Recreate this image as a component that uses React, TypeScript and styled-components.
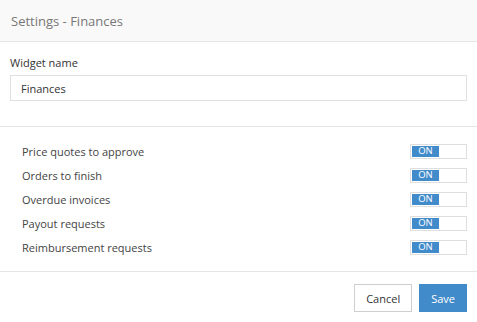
import React, { useState } from "react";
import styled, { createGlobalStyle } from "styled-components";

const GlobalStyle = createGlobalStyle`
  html, body {
    margin: 0;
    padding: 0;
    background: #fff;
  }
  body {
    font-family: "Open Sans", "Liberation Sans", sans-serif;
    color: #333;
  }
`;

const SModal = styled.div`
  width: 477px;
  height: 322px;
  display: flex;
  flex-direction: column;
  background: #fff;
`;

const SHeader = styled.div`
  height: 41px;
  display: flex;
  align-items: center;
  padding: 0 11px;
  background: #f9f9f9;
  border-bottom: 1px solid #e5e5e5;
  font-size: 13px;
  color: #777;
`;

const SSection = styled.div`
  padding: 13px 10px 25px;
  border-bottom: 1px solid #e5e5e5;
`;

const SLabel = styled.label`
  display: block;
  font-size: 11px;
  line-height: 16px;
  margin-bottom: 4px;
  color: #333;
`;

const SInput = styled.input`
  box-sizing: border-box;
  width: 100%;
  height: 26px;
  padding: 0 10px;
  border: 1px solid #e0e0e0;
  font-family: inherit;
  font-size: 11px;
  color: #333;
  outline: none;
`;

const SList = styled.div`
  padding: 12px 10px 12px 22px;
  border-bottom: 1px solid #e5e5e5;
`;

const SRow = styled.div`
  height: 24px;
  display: flex;
  align-items: center;
  justify-content: space-between;
  font-size: 11px;
  color: #444;
`;

const SToggle = styled.button<{ $on: boolean }>`
  box-sizing: border-box;
  width: 57px;
  height: 15px;
  padding: 1px;
  border: 1px solid #dedede;
  background: #fff;
  display: flex;
  justify-content: ${(p) => (p.$on ? "flex-start" : "flex-end")};
  cursor: pointer;

  & span {
    width: 27px;
    height: 100%;
    display: flex;
    align-items: center;
    justify-content: center;
    background: ${(p) => (p.$on ? "#428bca" : "#ccc")};
    color: #fff;
    font-family: "Open Sans", "Liberation Sans", sans-serif;
    font-size: 9.5px;
    line-height: 1;
  }
`;

const SFooter = styled.div`
  display: flex;
  justify-content: flex-end;
  gap: 7px;
  padding: 12px 10px 10px;
`;

const SButton = styled.button<{ $primary?: boolean }>`
  box-sizing: border-box;
  height: 28px;
  padding: 0 11px;
  font-family: inherit;
  font-size: 11px;
  cursor: pointer;
  border: 1px solid ${(p) => (p.$primary ? "#428bca" : "#cfcfcf")};
  background: ${(p) => (p.$primary ? "#428bca" : "#fff")};
  color: ${(p) => (p.$primary ? "#fff" : "#333")};
`;

const items = [
  "Price quotes to approve",
  "Orders to finish",
  "Overdue invoices",
  "Payout requests",
  "Reimbursement requests",
];

function App() {
  const [name, setName] = useState("Finances");
  const [enabled, setEnabled] = useState<boolean[]>(items.map(() => true));

  return (
    <SModal>
      <GlobalStyle />
      <SHeader>Settings - Finances</SHeader>
      <SSection>
        <SLabel>Widget name</SLabel>
        <SInput value={name} onChange={(e) => setName(e.target.value)} />
      </SSection>
      <SList>
        {items.map((item, i) => (
          <SRow key={item}>
            {item}
            <SToggle
              $on={enabled[i]}
              onClick={() =>
                setEnabled(enabled.map((v, j) => (j === i ? !v : v)))
              }
            >
              <span>{enabled[i] ? "ON" : "OFF"}</span>
            </SToggle>
          </SRow>
        ))}
      </SList>
      <SFooter>
        <SButton>Cancel</SButton>
        <SButton $primary>Save</SButton>
      </SFooter>
    </SModal>
  );
}

export default App;
